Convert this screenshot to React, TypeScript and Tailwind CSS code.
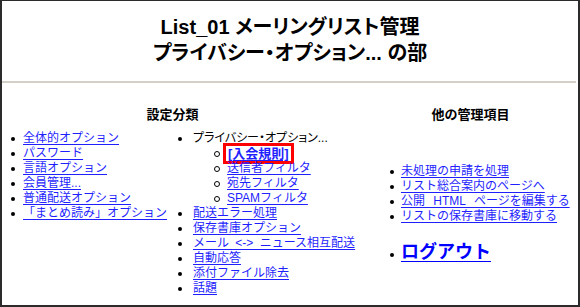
import React from 'react';

const LINK = 'inline-block h-[15px] leading-[15px] text-[#1f1fff] underline underline-offset-[2px] decoration-[1px]';

const LEFT_ITEMS = [
  '全体的オプション',
  'パスワード',
  '言語オプション',
  '会員管理...',
  '普通配送オプション',
  '「まとめ読み」オプション',
];

const SUB_ITEMS = ['送信者フィルタ', '宛先フィルタ', 'SPAMフィルタ'];

const MIDDLE_ITEMS = [
  '配送エラー処理',
  '保存書庫オプション',
  'メール <-> ニュース相互配送',
  '自動応答',
  '添付ファイル除去',
  '話題',
];

const RIGHT_ITEMS = [
  '未処理の申請を処理',
  'リスト総合案内のページへ',
  '公開 HTML ページを編集する',
  'リストの保存書庫に移動する',
];

function Disc() {
  return <span className="w-[4px] h-[4px] rounded-full bg-black flex-shrink-0" />;
}

function Circle() {
  return <span className="w-[6px] h-[6px] rounded-full border border-black flex-shrink-0" />;
}

function Row({ children, marker, indent }: { children: React.ReactNode; marker: React.ReactNode; indent: string }) {
  return (
    <li className="flex items-center h-[15px] whitespace-nowrap">
      <span className={`flex items-center flex-shrink-0 ${indent}`}>{marker}</span>
      {children}
    </li>
  );
}

export default function App() {
  return (
    <div className="w-[580px] h-[307px] bg-white border-l-2 border-t border-r-2 border-b-2 border-[#2b2b2b] overflow-hidden font-['Liberation_Sans','Noto_Sans_CJK_JP',sans-serif] text-[12px] leading-[15px] text-black">
      {/* title */}
      <div className="pt-[13px] pb-[15px] text-center font-bold text-[20px] leading-[26px] [font-feature-settings:'palt']">
        <div>List_01 メーリングリスト管理</div>
        <div>プライバシー・オプション... の部</div>
      </div>

      <div className="h-[2px] mr-[2px] bg-[#d4d0c8]" />

      {/* column headings */}
      <div className="flex mt-[24px] font-bold text-[13px] leading-[16px]">
        <div className="w-[342px] text-center">設定分類</div>
        <div className="w-[236px] text-center pl-[20px]">他の管理項目</div>
      </div>

      <div className="flex mt-[8px]">
        {/* left */}
        <ul className="w-[166px] self-start">
          {LEFT_ITEMS.map((t) => (
            <Row key={t} marker={<Disc />} indent="pl-[9px] w-[21px]">
              <a href="#" className={LINK}>{t}</a>
            </Row>
          ))}
        </ul>

        {/* middle */}
        <ul className="w-[212px] self-start">
          <Row marker={<Disc />} indent="pl-[10px] w-[25px]">
            <span className="inline-block h-[15px] leading-[15px] [font-feature-settings:'palt']">プライバシー・オプション...</span>
          </Row>
          <li>
            <ul>
              <Row marker={<Circle />} indent="pl-[46px] w-[58px]">
                <a href="#" className={`${LINK} font-bold text-[13px] outline-3 outline-[#ff0000] px-[2px] h-[13px] leading-[13px]`}>[入会規則]</a>
              </Row>
              {SUB_ITEMS.map((t) => (
                <Row key={t} marker={<Circle />} indent="pl-[46px] w-[59px]">
                  <a href="#" className={LINK}>{t}</a>
                </Row>
              ))}
            </ul>
          </li>
          {MIDDLE_ITEMS.map((t) => (
            <Row key={t} marker={<Disc />} indent="pl-[10px] w-[25px]">
              <a href="#" className={`${LINK} [word-spacing:3px]`}>{t}</a>
            </Row>
          ))}
        </ul>

        {/* right */}
        <ul className="flex-1 self-center">
          {RIGHT_ITEMS.map((t) => (
            <Row key={t} marker={<Disc />} indent="pl-[10px] w-[21px]">
              <a href="#" className={`${LINK} [word-spacing:5px]`}>{t}</a>
            </Row>
          ))}
          <li className="flex items-end mt-[17px] h-[22px] whitespace-nowrap">
            <span className="flex items-center pl-[10px] w-[21px] pb-[6px]">
              <Disc />
            </span>
            <a href="#" className="inline-block h-[22px] text-[#0000ff] underline underline-offset-[3px] decoration-[1px] font-bold text-[18px] leading-[22px]">
              ログアウト
            </a>
          </li>
        </ul>
      </div>
    </div>
  );
}
